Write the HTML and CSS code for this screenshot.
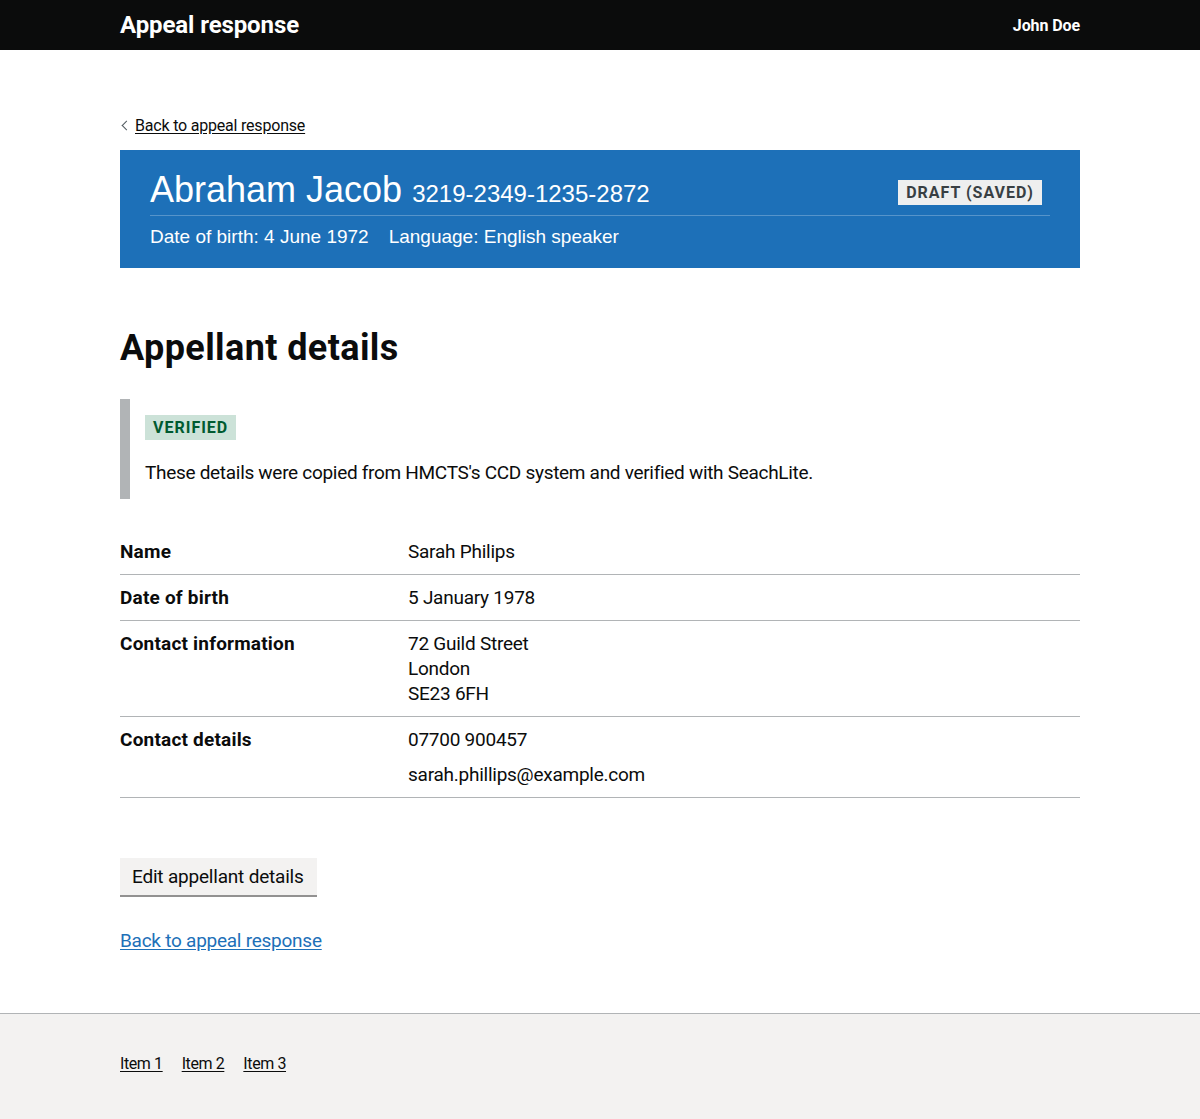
FILE: index.html
```html
<!DOCTYPE html>
<html lang="en">
<head>
<meta charset="utf-8">
<title>Appellant details</title>
<link rel="stylesheet" href="styles.css">
</head>
<body>
<header class="header">
  <div class="container header-inner">
    <span class="service-name">Appeal response</span>
    <span class="user-name">John Doe</span>
  </div>
</header>
<div class="page">
  <main class="container main">
    <a class="back-link" href="#"><span class="chev"></span>Back to appeal response</a>
    <section class="banner">
      <div class="banner-top">
        <div class="banner-title"><span class="person">Abraham Jacob</span> <span class="ref">3219-2349-1235-2872</span></div>
        <strong class="tag tag-grey">Draft (saved)</strong>
      </div>
      <div class="banner-meta">
        <span>Date of birth: 4 June 1972</span>
        <span>Language: English speaker</span>
      </div>
    </section>

    <h1 class="heading">Appellant details</h1>

    <div class="inset">
      <strong class="tag tag-green">Verified</strong>
      <p class="inset-text">These details were copied from HMCTS's CCD system and verified with SeachLite.</p>
    </div>

    <dl class="summary">
      <div class="row">
        <dt>Name</dt>
        <dd>Sarah Philips</dd>
      </div>
      <div class="row">
        <dt>Date of birth</dt>
        <dd>5 January 1978</dd>
      </div>
      <div class="row">
        <dt>Contact information</dt>
        <dd>72 Guild Street<br>London<br>SE23 6FH</dd>
      </div>
      <div class="row">
        <dt>Contact details</dt>
        <dd><p class="para">07700 900457</p><p class="para last">sarah.phillips@example.com</p></dd>
      </div>
    </dl>

    <button class="button" type="button">Edit appellant details</button>
    <p class="bottom-link-wrap"><a class="link" href="#">Back to appeal response</a></p>
  </main>
  <footer class="footer">
    <div class="container footer-links">
      <a href="#">Item 1</a>
      <a href="#">Item 2</a>
      <a href="#">Item 3</a>
    </div>
  </footer>
</div>
</body>
</html>
```

FILE: styles.css
```css
* { box-sizing: border-box; }
html, body { margin: 0; padding: 0; }
body {
  font-family: "Roboto", "Liberation Sans", Arial, sans-serif;
  color: #0b0c0c;
  background: #fff;
  min-height: 1119px;
  display: flex;
  flex-direction: column;
}
.container { width: 960px; margin: 0 auto; }

.header { background: #0b0c0c; color: #fff; height: 50px; }
.header-inner { height: 50px; display: flex; justify-content: space-between; align-items: center; }
.service-name { font-weight: 700; font-size: 24px; letter-spacing: -0.1px; }
.user-name { font-weight: 700; font-size: 16px; letter-spacing: -0.1px; }

.page { flex: 1; display: flex; flex-direction: column; }
.main { padding-top: 64px; padding-bottom: 60px; }

.back-link {
  display: inline-flex; align-items: center;
  font-size: 16px; line-height: 20px; color: #0b0c0c;
  text-decoration: underline; text-underline-offset: 2px;
  margin-bottom: 14px; letter-spacing: -0.2px;
}
.chev {
  width: 7px; height: 7px; border-left: 1px solid #505a5f; border-bottom: 1px solid #505a5f;
  transform: rotate(45deg); margin-left: 3px; margin-right: 5px;
}

.banner {
  background: #1d70b8; color: #fff;
  padding: 20px 30px 19px;
  font-family: "Liberation Sans", Arial, sans-serif;
}
.banner-top {
  display: flex; justify-content: space-between; align-items: flex-start;
  border-bottom: 1px solid #5694ca; padding-bottom: 5px;
  height: 46px;
}
.banner-title { line-height: 40px; height: 40px; font-size: 36px; white-space: nowrap; }
.person { font-size: 36px; line-height: 1; }
.ref { font-size: 24px; line-height: 1; }
.banner-meta { margin-top: 8px; font-size: 19px; line-height: 25px; display: flex; gap: 20px; }

.tag {
  display: inline-block; font-family: "Roboto", "Liberation Sans", Arial, sans-serif;
  font-weight: 700; font-size: 16px; line-height: 17px;
  text-transform: uppercase; letter-spacing: 1px;
  padding: 4px 8px;
}
.tag-grey { background: #eeefef; color: #383f43; margin-top: 10px; margin-right: 8px; }
.tag-green { background: #cce2d8; color: #005a30; }

.heading { font-size: 36px; font-weight: 700; line-height: 40px; margin: 60px 0 31px; letter-spacing: 0.4px; }

.inset { border-left: 10px solid #b1b4b6; padding: 16px 15px 14px; margin-bottom: 30px; }
.inset-text { font-size: 19px; line-height: 25px; margin: 20px 0 0; letter-spacing: -0.3px; }

.summary { margin: 0 0 60px; font-size: 19px; line-height: 25px; }
.row { display: flex; border-bottom: 1px solid #b1b4b6; }
.row dt { width: 288px; font-weight: 700; padding: 10px 20px 10px 0; margin: 0; letter-spacing: 0.2px; }
.row dd { margin: 0; padding: 10px 0; flex: 1; letter-spacing: -0.25px; }
.para { margin: 0 0 10px; }
.para.last { margin-bottom: 0; }

.button {
  font-family: inherit; font-size: 19px; line-height: 21px; letter-spacing: -0.2px;
  background: #f3f2f1; color: #0b0c0c;
  border: 0; border-radius: 0;
  box-shadow: 0 2px 0 #929191;
  padding: 8px 13px 8px 12px; margin: 0 0 33px;
  display: block; cursor: pointer;
}
.bottom-link-wrap { margin: 0; font-size: 19px; line-height: 25px; }
.link { color: #1d70b8; text-decoration: underline; text-underline-offset: 2px; letter-spacing: -0.25px; }

.footer { background: #f3f2f1; border-top: 1px solid #b1b4b6; flex: 1; padding-top: 40px; }
.footer-links { display: flex; gap: 19px; font-size: 16px; line-height: 20px; letter-spacing: -0.4px; }
.footer-links a { color: #0b0c0c; text-decoration: underline; text-underline-offset: 2px; }
```
